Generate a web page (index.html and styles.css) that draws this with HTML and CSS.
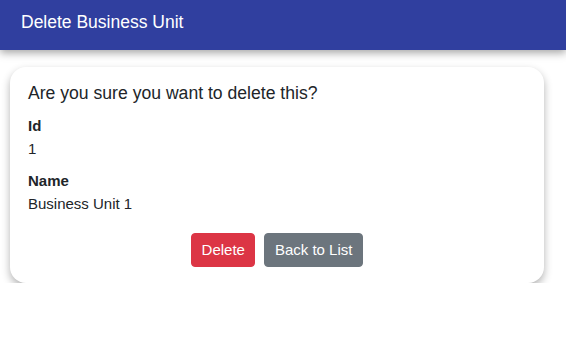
FILE: index.html
```html
<!DOCTYPE html>
<html lang="en">
<head>
  <meta charset="UTF-8">
  <meta name="viewport" content="width=device-width, initial-scale=1.0">
  <title>Delete Business Unit</title>
  <link rel="stylesheet" href="styles.css">
</head>
<body>
  <header class="app-bar">
    <span class="app-title">Delete Business Unit</span>
  </header>
  <main class="page">
    <div class="card">
      <h3 class="confirm">Are you sure you want to delete this?</h3>
      <dl class="details">
        <dt>Id</dt>
        <dd>1</dd>
        <dt>Name</dt>
        <dd>Business Unit 1</dd>
      </dl>
      <form class="actions">
        <button type="button" class="btn btn-danger">Delete</button>
        <button type="button" class="btn btn-secondary">Back to List</button>
      </form>
    </div>
  </main>
</body>
</html>
```

FILE: styles.css
```css
body {
  margin: 0;
  padding: 0;
  font-family: 'Liberation Sans', Arial, sans-serif;
  background: #ffffff;
  color: #212529;
}

.app-bar {
  box-sizing: border-box;
  height: 50px;
  padding: 12px 21px;
  background: #303f9f;
  color: #ffffff;
  box-shadow: 0 3px 8px rgba(0, 0, 0, 0.35);
  position: relative;
}

.app-title {
  font-size: 17.5px;
}

.page {
  padding: 17px 22px 0 10px;
}

.card {
  background: #ffffff;
  border-radius: 16px;
  box-shadow: 0 4px 8px rgba(0, 0, 0, 0.3);
  padding: 16px 18px 16px 18px;
}

.confirm {
  margin: 0 0 10px;
  font-size: 17.6px;
  font-weight: normal;
}

.details {
  margin: 0;
  font-size: 15px;
  line-height: 23px;
}

.details dt {
  font-weight: bold;
}

.details dd {
  margin: 0 0 9px;
}

.details dd:last-child {
  margin-bottom: 0;
}

.actions {
  display: flex;
  justify-content: center;
  gap: 9px;
  margin-top: 18px;
}

.btn {
  font-family: inherit;
  font-size: 15px;
  line-height: 22px;
  padding: 5px 9.5px;
  border: 1px solid transparent;
  border-radius: 4px;
  color: #ffffff;
  cursor: pointer;
}

.btn-danger {
  background: #dc3545;
  border-color: #dc3545;
}

.btn-secondary {
  background: #6c757d;
  border-color: #6c757d;
}
```
